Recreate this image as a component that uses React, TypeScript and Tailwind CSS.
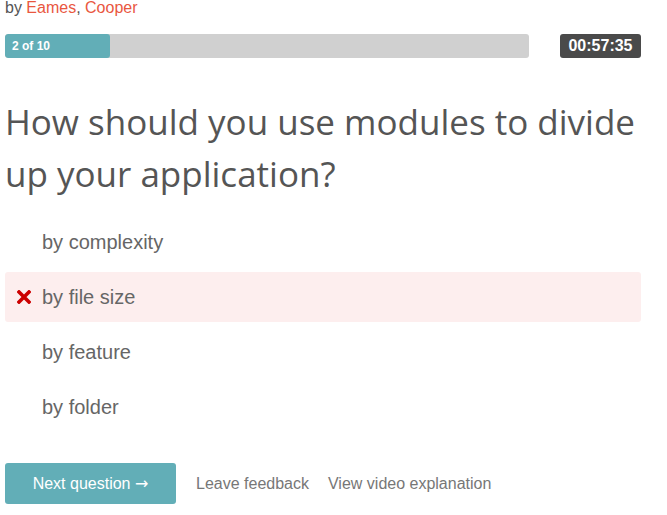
import React from "react";

const options = [
  { text: "by complexity", wrong: false },
  { text: "by file size", wrong: true },
  { text: "by feature", wrong: false },
  { text: "by folder", wrong: false },
];

export default function App() {
  return (
    <div className="w-[667px] h-[515px] bg-white overflow-hidden" style={{ fontFamily: '"Liberation Sans", Arial, sans-serif' }}>
      <div className="pl-[5px] w-[641px]">
        <div className="text-[16px] leading-[17px] text-[#555] -mt-[1px]">
          by <span className="text-[#e9573f]">Eames</span>, <span className="text-[#e9573f]">Cooper</span>
        </div>
        <div className="flex items-center mt-[18px] h-[24px]">
          <div className="relative w-[524px] h-[24px] rounded-[3px] bg-[#d0d0d0] overflow-hidden">
            <div className="absolute left-0 top-0 h-full w-[105px] bg-[#62aeb7] rounded-[3px] flex items-center pl-[7px]">
              <span className="text-white text-[12px] font-bold">2 of 10</span>
            </div>
          </div>
          <div className="ml-auto w-[81px] h-[24px] rounded-[3px] bg-[#4a4a4a] flex items-center justify-center text-white font-bold text-[16px]">
            00:57:35
          </div>
        </div>
        <h1
          className="mt-[38px] text-[35px] leading-[52px] text-[#555]"
          style={{ fontFamily: '"Open Sans", sans-serif' }}
        >
          How should you use modules to divide up your application?
        </h1>
        <div className="mt-[17px] flex flex-col gap-[5px]">
          {options.map((o) => (
            <div
              key={o.text}
              className={
                "h-[50px] rounded-[3px] flex items-center text-[20px] text-[#666] " +
                (o.wrong ? "bg-[#fdeeee]" : "")
              }
            >
              <div className="w-[37px] flex justify-end pr-[11px]">
                {o.wrong && (
                  <svg width="14" height="14" viewBox="0 0 14 14">
                    <path d="M2 2 L12 12 M12 2 L2 12" stroke="#cc0000" strokeWidth="3.6" strokeLinecap="square" />
                  </svg>
                )}
              </div>
              <span>{o.text}</span>
            </div>
          ))}
        </div>
        <div className="mt-[31px] flex items-center">
          <button className="w-[171px] h-[41px] rounded-[3px] bg-[#62aeb7] text-white text-[16px]">
            Next question <span style={{ fontFamily: '"DejaVu Sans", sans-serif' }}>→</span>
          </button>
          <span className="ml-[20px] text-[16px] text-[#777]">Leave feedback</span>
          <span className="ml-[19px] text-[16px] text-[#777]">View video explanation</span>
        </div>
      </div>
    </div>
  );
}
